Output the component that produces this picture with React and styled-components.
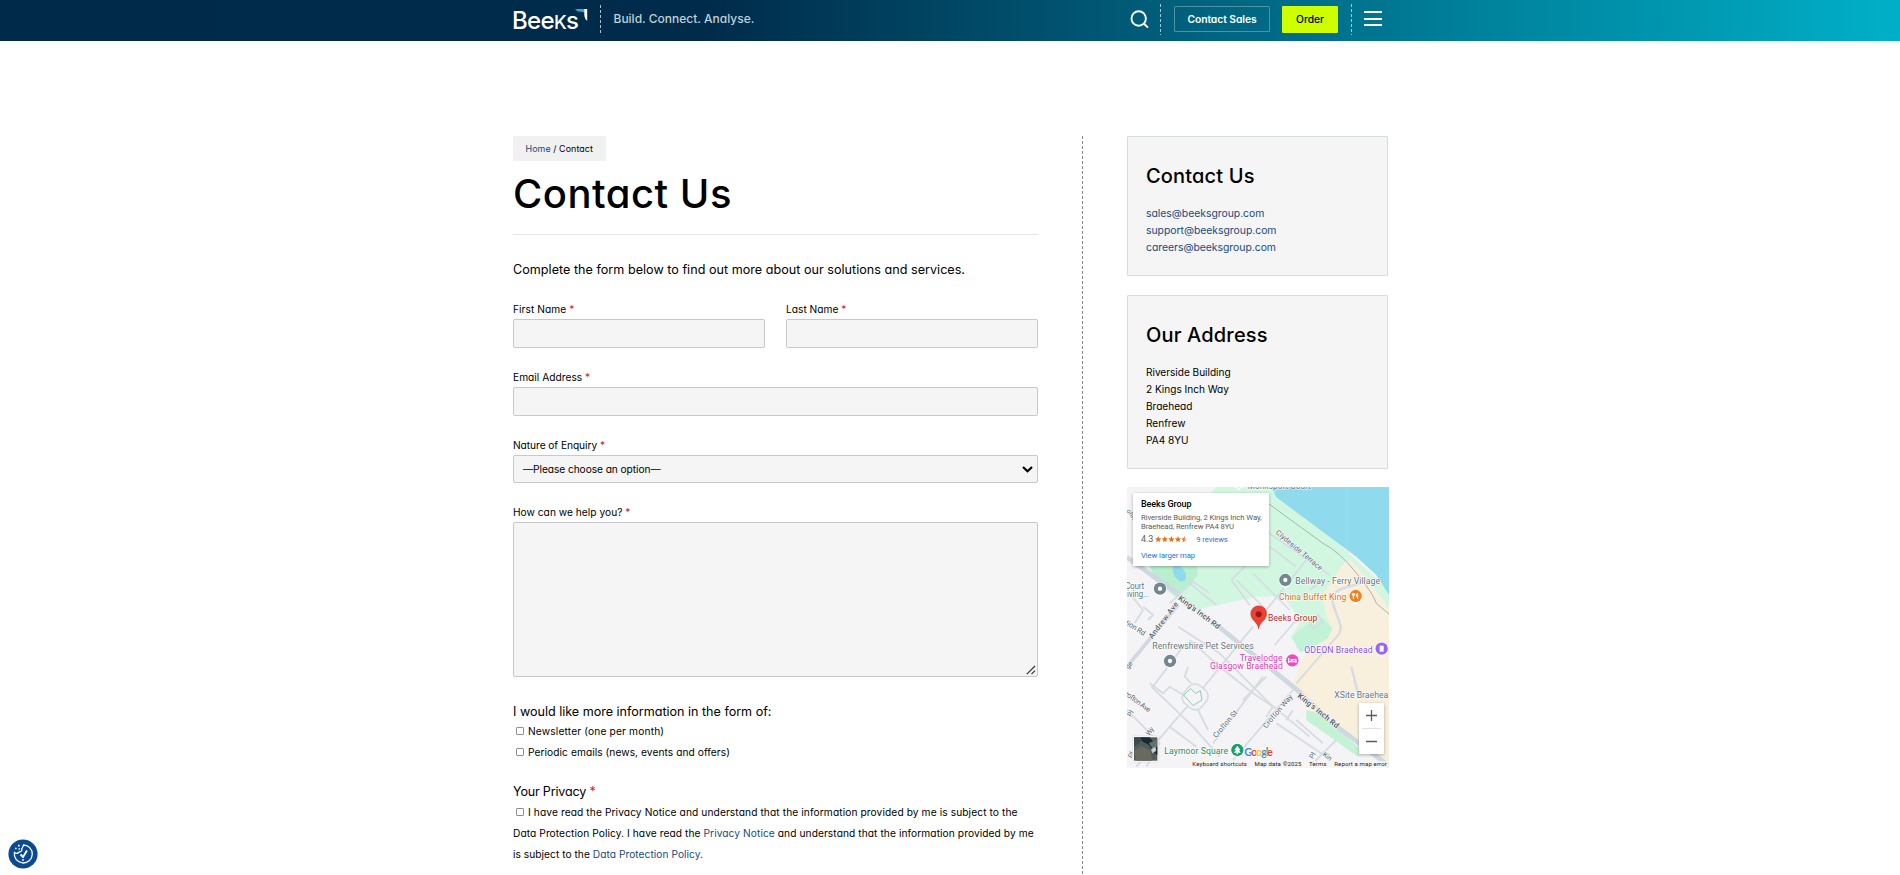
import React from "react";
import styled, { createGlobalStyle } from "styled-components";

const Global = createGlobalStyle`
  *, *::before, *::after { box-sizing: border-box; }
  body {
    margin: 0;
    background: #fff;
    color: #000;
    font-family: Inter, "Open Sans", sans-serif;
    font-feature-settings: "cv11";
    overflow: hidden;
  }
  h1, h2, p { margin: 0; font-weight: 500; }
`;

const Header = styled.header`
  height: 41px;
  background: linear-gradient(90deg, #002a4a 0%, #002b4a 37%, #00b0c8 100%);
`;
const HeaderInner = styled.div`
  width: 874px;
  height: 41px;
  margin: 0 auto;
  display: flex;
  align-items: flex-start;
`;
const Logo = styled.div`
  position: relative;
  width: 87px;
  height: 41px;
  color: #fff;
  font-size: 24px;
  font-weight: 500;
  line-height: 42px;
  letter-spacing: -0.65px;
  svg { position: absolute; left: 62px; top: 8px; }
`;
const LogoText = styled.span`
  display: inline-block;
  margin-left: -1px;
  span { font-size: 18.5px; }
`;
const Dash = styled.div`
  width: 1px;
  height: ${(p) => p.$h}px;
  margin: ${(p) => p.$top}px 0 0 ${(p) => p.$left || 0}px;
  background: repeating-linear-gradient(180deg, #a9c4cf 0 3px, transparent 3px 5px);
`;
const Tagline = styled.div`
  margin-left: 12.5px;
  font-size: 12px;
  font-weight: 500;
  line-height: 38px;
  color: #bfd0d9;
`;
const Tools = styled.div`
  margin-left: auto;
  display: flex;
  align-items: flex-start;
`;
const SearchIcon = styled.svg`
  margin: 10px 11px 0 0;
`;
const HeaderButton = styled.button`
  height: ${(p) => (p.$primary ? 27 : 26)}px;
  width: ${(p) => (p.$primary ? 56 : 96)}px;
  margin: 6px 0 0 ${(p) => (p.$primary ? 12 : 13)}px;
  padding: 0 0 1px;
  border: ${(p) => (p.$primary ? "0" : "1px solid #4f93a3")};
  border-radius: 1px;
  background: ${(p) => (p.$primary ? "#cdff00" : "transparent")};
  color: ${(p) => (p.$primary ? "#000" : "#fff")};
  font: ${(p) => (p.$primary ? 500 : 600)} 10.3px Inter, sans-serif;
  font-feature-settings: "cv11";
  letter-spacing: -0.06px;
`;
const Burger = styled.div`
  display: grid;
  gap: 4.5px;
  width: 18px;
  margin: 11px 5px 0 12px;
  i { height: 2px; background: #fff; }
`;

const Main = styled.main`
  width: 874px;
  margin: 0 auto;
  padding-top: 95px;
  display: flex;
  align-items: flex-start;
`;
const Left = styled.section`
  flex: none;
  width: 569px;
  height: 739px;
  padding-right: 44px;
`;
const ColumnRule = styled.div`
  flex: none;
  width: 1px;
  height: 739px;
  background: repeating-linear-gradient(180deg, #8a8a8a 0 3px, transparent 3px 5px);
`;
const Right = styled.aside`
  flex: none;
  width: 262px;
  margin-left: 44px;
  display: flex;
  flex-direction: column;
`;

const Link = styled.a`
  color: #17497f;
  text-decoration: none;
`;
const Crumbs = styled.nav`
  width: 93px;
  height: 25px;
  background: #f1f1f1;
  font-size: 8.9px;
  line-height: 25px;
  padding-left: 12.5px;
  letter-spacing: 0.08px;
  white-space: nowrap;
`;
const Title = styled.h1`
  margin-top: 10px;
  padding-bottom: 18px;
  height: 64px;
  border-bottom: 1px solid #e3e5e6;
  font-size: 40px;
  line-height: 45px;
  letter-spacing: 0.5px;
`;
const Intro = styled.p`
  margin: 25px 0 21px;
  font-size: 12.6px;
  font-weight: 400;
  line-height: 20px;
  letter-spacing: 0.018px;
`;
const Row = styled.div`
  display: grid;
  grid-template-columns: repeat(${(p) => p.$cols || 1}, 1fr);
  column-gap: 21px;
  margin-bottom: ${(p) => p.$gap || 21}px;
`;
const Label = styled.label`
  display: block;
  height: 18px;
  font-size: 10.2px;
  line-height: 16px;
  letter-spacing: ${(p) => p.$ls}px;
`;
const Required = styled.span`
  color: #d0252d;
`;
const fieldBox = `
  display: block;
  width: 100%;
  border: 1px solid #c6c8ca;
  border-radius: 2px;
  background: #f5f5f5;
  outline: 0;
`;
const Input = styled.input`
  ${fieldBox}
  height: 29px;
`;
const Select = styled.div`
  ${fieldBox}
  height: 28px;
  display: flex;
  align-items: center;
  justify-content: space-between;
  padding: 0 4px 0 9px;
  font-size: 10.2px;
  letter-spacing: -0.074px;
`;
const Area = styled.div`
  ${fieldBox}
  height: 155px;
  display: flex;
  align-items: flex-end;
  justify-content: flex-end;
  padding: 0 1px 1px 0;
`;
const Legend = styled.div`
  font-size: 12.6px;
  line-height: 20px;
  height: ${(p) => p.$h || 20}px;
  letter-spacing: ${(p) => p.$ls}px;
`;
const Option = styled.div`
  font-size: 10.2px;
  line-height: 21px;
  letter-spacing: ${(p) => p.$ls}px;
  white-space: nowrap;
`;
const Check = styled.span`
  display: inline-block;
  width: 8px;
  height: 8px;
  margin: 0 4px 0 3px;
  border: 1px solid #8f8f8f;
  border-radius: 1px;
  background: #fff;
`;
const Privacy = styled.div`
  margin-top: 18.5px;
`;

const Card = styled.section`
  width: 261px;
  height: ${(p) => p.$h}px;
  padding: 24px 18px 0;
  margin-bottom: ${(p) => p.$gap}px;
  border: 1px solid #d9dcdc;
  border-radius: 1px;
  background: #f5f5f5;
`;
const CardTitle = styled.h2`
  margin-bottom: 14px;
  font-size: 20px;
  line-height: 30px;
  letter-spacing: 0.17px;
`;
const CardLine = styled.div`
  font-size: ${(p) => (p.$plain ? 10.1 : 10.4)}px;
  line-height: 17px;
  letter-spacing: -0.02px;
`;

const MapBox = styled.div`
  position: relative;
  width: 262px;
  height: 281px;
  overflow: hidden;
  font-family: Roboto, sans-serif;
  > svg { display: block; }
`;
const Place = styled.div`
  position: absolute;
  left: 6px;
  top: 6px;
  width: 136px;
  height: 73px;
  padding: 6px 0 0 8px;
  background: #fff;
  box-shadow: 0 1px 3px rgba(0, 0, 0, 0.3);
  font-size: 7.7px;
  line-height: 9px;
  letter-spacing: -0.08px;
  color: #5b5b5b;
  white-space: nowrap;
`;
const PlaceName = styled.div`
  font-size: 9px;
  line-height: 11px;
  font-weight: 500;
  color: #000;
  margin-bottom: 3px;
`;
const Rating = styled.div`
  display: flex;
  align-items: center;
  height: 12px;
  margin-top: 2px;
  font-size: 9px;
  a { font-size: 7.7px; }
`;
const Stars = styled.svg`
  margin: 0 8px 0 2px;
`;
const MapLink = styled.a`
  color: #1a73e8;
`;
const Larger = styled.div`
  margin-top: 6px;
  color: #1a73e8;
`;
const Zoom = styled.div`
  position: absolute;
  right: 5px;
  top: 216px;
  width: 25px;
  height: 51px;
  background: #fff;
  box-shadow: 0 1px 3px rgba(0, 0, 0, 0.3);
`;
const Attribution = styled.div`
  position: absolute;
  right: 2px;
  bottom: 0;
  display: flex;
  gap: 7.5px;
  height: 8px;
  font-size: 6px;
  line-height: 8px;
  color: #222;
  letter-spacing: 0.15px;
  white-space: nowrap;
`;
const Cookie = styled.button`
  position: fixed;
  left: 8px;
  bottom: 6px;
  width: 30px;
  height: 30px;
  padding: 0;
  border: 0;
  background: none;
`;

const ROADS = [
  [5, "M240 310 L320 375 M180 370 L250 305 L300 340 M365 300 L480 185 M365 300 L420 375 M380 300 L470 390 L590 240 M450 140 L660 285 M480 200 L560 260 M430 280 L540 390 M640 300 L600 330 M495 495 L560 420 M600 430 L625 405 L640 428 L608 446 Z"],
  [5.5, "M52 560 L200 375 M60 340 L100 390 L75 430 M100 380 L130 405 L115 420 M240 480 L330 560 L430 640 M130 620 L220 500 M205 440 L330 520 M275 630 L430 440 M125 620 L250 740 L330 830 M120 610 L160 640 L180 620 L230 650 M235 560 L225 590 L245 610 M290 640 L265 690 L295 750 M180 740 L250 660 M80 860 L180 740 M310 790 L460 590 M330 520 L480 670 L600 770 M400 660 L470 590 M370 840 L550 630 M430 640 L490 680 L470 710 M500 730 L650 830 M560 720 L640 790 M600 860 L680 780 M52 690 L150 790 L110 860 M180 740 L260 800 M560 610 L690 460 M530 720 L550 690"],
  [7, "M690 460 L694 440 L670 372 Q665 335 700 325 L750 310 M725 560 L745 640"],
];

const LABELS = [
  [414, 27, "Monksport Court", 25, "#68767f", 190],
  [46, 326, "Court", 25, "#68767f", 58],
  [52, 351, "iving...", 25, "#68767f", 66],
  [557, 312, "Bellway - Ferry Village", 26, "#68767f", 254],
  [508, 361, "China Buffet King", 26, "#e8710a", 202],
  [475, 423, "Beeks Group", 26, "#c5221f", 148],
  [128, 508, "Renfrewshire Pet Services", 26, "#68767f", 304],
  [390, 542, "Travelodge", 26, "#e038b4", 129],
  [301, 567, "Glasgow Braehead", 26, "#e038b4", 219],
  [584, 518, "ODEON Braehead", 26, "#8a4fe8", 205],
  [674, 653, "XSite Braehea", 26, "#68767f", 162],
  [164, 822, "Laymoor Square", 26, "#1e8e63", 191],
];

const STREETS = [
  [204, 358, 37, "King's Inch Rd", 23, 150, 600],
  [562, 650, 39, "King's Inch Rd", 23, 152, 600],
  [128, 478, -53, "Andrew Ave", 23, 132, 500],
  [497, 160, 40, "Clydeside Terrace", 22, 175, 400],
  [320, 775, -50, "Crofton St", 22, 100, 400],
  [470, 746, -50, "Crofton Way", 22, 124, 400],
  [46, 645, 37, "rofton Ave", 22, 88, 400],
  [46, 432, 33, "tion Rd", 22, 66, 400],
  [50, 92, 58, "ohn", 19, 34, 400],
  [118, 768, -52, "Wy", 21, 26, 400],
  [64, 712, -60, "Pl", 21, 18, 400],
  [66, 836, -60, "Pl", 21, 18, 400],
  [610, 838, -60, "Pl", 21, 18, 400],
  [638, 826, 38, "Kin", 21, 28, 400],
  [56, 568, -50, "ge", 21, 22, 400],
];

const Pin = ({ x, y, color, children }) => (
  <g transform={`translate(${x} ${y})`}>
    <path d="M-19 6 Q-16 17 -6 21 L0 27 L6 21 Q16 17 19 6 Z" fill="#fff" />
    <circle r="20" fill="#fff" />
    <circle r="18.5" fill={color} />
    {children || <circle r="6.5" fill="#fff" />}
  </g>
);

const MapArt = () => (
  <svg width="262" height="281" viewBox="52 21 786 843">
    <rect x="52" y="21" width="786" height="843" fill="#f4f3f6" />
    <path d="M320 21 L500 21 L838 330 L838 440 L670 430 L650 480 L590 510 L575 515 L545 470 L575 420 L520 350 L440 350 L245 392 L120 290 L120 220 Z" fill="#d1f7e1" />
    <path d="M120 250 L260 250 L265 285 L205 352 L135 300 Z" fill="#b9efcf" />
    <path d="M720 238 Q690 255 672 300 L640 340 Q640 400 668 445 L655 475 L590 512 L545 620 L600 690 L838 864 L838 385 L770 290 Z" fill="#f8efdc" />
    <path d="M545 470 L590 435 L640 415 L668 445 L655 475 L590 512 L570 515 Z" fill="#c3f3d6" />
    <path d="M590 690 L640 705 L760 815 L745 830 L590 720 Z" fill="#c5f2d5" />
    <path d="M485 21 L838 21 L838 345 L800 285 L740 230 L500 52 Z" fill="#90daee" />
    <path d="M712 21 V215" stroke="#a5e2f2" strokeWidth="2" />
    <path d="M190 258 Q185 285 205 300 Q222 312 229 294 Q232 275 210 258 Z" fill="#90daee" />
    <path d="M475 70 L640 190 Q690 215 745 285 Q790 340 800 370 L838 402" fill="none" stroke="#9eb9b3" strokeWidth="3" />
    {ROADS.map(([w, d]) => (
      <path key={w} d={d} fill="none" stroke="#d5dce2" strokeWidth={w} strokeLinejoin="round" />
    ))}
    <path d="M52 232 L210 345 M325 438 L575 640 M680 738 L838 858" stroke="#cfd7e1" strokeWidth="14" />
    <path d="M210 345 L325 438 M575 640 L680 738" stroke="#e2e7ec" strokeWidth="12" />
    <path d="M52 560 L205 375" stroke="#d0d8e1" strokeWidth="11" />
    <rect x="222" y="617" width="68" height="70" rx="24" fill="#f4f3f6" stroke="#d5dce2" strokeWidth="5" transform="rotate(40 258 652)" />
    <path d="M243 626 L222 645 L235 660 L250 677 L277 660 L272 632 L258 640 Z" fill="none" stroke="#8ccbb7" strokeWidth="3" />

    <g fontFamily="Roboto, sans-serif" stroke="#fff" strokeOpacity=".8" strokeWidth="4" paintOrder="stroke" strokeLinejoin="round">
      {STREETS.map(([x, y, r, t, s, w, b], i) => (
        <text key={i} transform={`translate(${x} ${y}) rotate(${r})`} fontSize={s} fontWeight={b} fill="#566068" textLength={w}>{t}</text>
      ))}
      {LABELS.map(([x, y, t, s, c, w]) => (
        <text key={t + y} x={x} y={y} fontSize={s} fill={c} textLength={w}>{t}</text>
      ))}
    </g>

    <Pin x={388} y={4} color="#a8d9bd" />
    <Pin x={151} y={326} color="#748791" />
    <Pin x={527} y={300} color="#748791" />
    <Pin x={181} y={543} color="#748791" />
    <Pin x={738} y={348} color="#f28020">
      <path d="M-7 -9 V9 M-10 -9 V-2 H-3 V-9 M6 9 V-9 Q1 -5 2 2 H6" stroke="#fff" strokeWidth="3" fill="none" />
    </Pin>
    <Pin x={548} y={541} color="#ee4bc1">
      <path d="M-11 -7 V8 M-11 4 H11 V8 M11 4 V-2 H-1 V4 M-7 -1 H-3" stroke="#fff" strokeWidth="3.5" fill="none" />
    </Pin>
    <Pin x={816} y={506} color="#9b62f5">
      <path d="M-6 -9 H6 V9 H-6 Z" fill="#fff" />
    </Pin>
    <Pin x={383} y={810} color="#17a06a">
      <path d="M0 -13 L9 0 H5 L10 8 H-10 L-5 0 H-9 Z M-2 8 H2 V13 H-2 Z" fill="#fff" />
    </Pin>
    <path d="M447 447 C444 424 423 422 423 401 A24 24 0 0 1 471 401 C471 422 450 424 447 447 Z" fill="#ea4335" stroke="#c5221f" strokeWidth="1" />
    <circle cx="447" cy="403" r="9" fill="#a01713" />

    <g fontFamily="Lato, sans-serif" fontSize="33" fontWeight="700" stroke="#fff" strokeWidth="3" paintOrder="stroke">
      <text x="404" y="829" textLength="86">
        <tspan fill="#4285f4">G</tspan><tspan fill="#ea4335">o</tspan><tspan fill="#fbbc05">o</tspan><tspan fill="#4285f4">g</tspan><tspan fill="#34a853">l</tspan><tspan fill="#ea4335">e</tspan>
      </text>
    </g>

    <rect x="69" y="768" width="78" height="78" rx="4" fill="#fff" stroke="#b7bbbe" strokeWidth="1" />
    <rect x="73" y="772" width="70" height="70" fill="#515c5b" />
    <path d="M73 772 H100 L88 790 L73 800 Z" fill="#3b494c" />
    <path d="M80 842 L73 812 L95 798 L122 812 L128 842 Z" fill="#68695f" />
    <path d="M93 772 H120 L143 800 V826 L128 812 L118 795 L97 784 Z" fill="#172b35" />
    <path d="M118 790 L143 776 V800 L128 806 Z" fill="#63706f" />
    <path d="M124 808 L137 800 L140 812 L128 820 Z" fill="#c3cccb" />
    <rect x="245" y="843" width="593" height="21" fill="#f5f5f5" opacity=".7" />
  </svg>
);

const STAR = "M3.2 0 L4.1 2.2 L6.4 2.4 L4.7 3.9 L5.2 6.1 L3.2 4.9 L1.2 6.1 L1.7 3.9 L0 2.4 L2.3 2.2 Z";
const RatingStars = () => (
  <Stars width="33" height="7" viewBox="0 0 33 7" fill="#e7711b">
    {[0, 1, 2, 3].map((i) => (
      <path key={i} d={STAR} transform={`translate(${i * 6.6} 0)`} />
    ))}
    <path d={STAR} transform="translate(26.4 0)" fill="#d9d4cf" />
    <path d="M3.2 0 L3.2 4.9 L1.2 6.1 L1.7 3.9 L0 2.4 L2.3 2.2 Z" transform="translate(26.4 0)" />
  </Stars>
);

const Field = ({ label, ls, children }) => (
  <div>
    <Label $ls={ls}>{label} <Required>*</Required></Label>
    {children}
  </div>
);

export default function App() {
  return (
    <>
      <Global />
      <Header>
        <HeaderInner>
          <Logo>
            <LogoText>Bee<span>K</span>s</LogoText>
            <svg width="13" height="14" viewBox="0 0 13 14">
              <path d="M0 1 H9.4 V4.6 Q6 3.4 2.6 3.6 Z" fill="#35a9cc" />
              <path d="M9.2 1 H12.2 V13 Q9.8 11 9.4 8 Z" fill="#fff" />
            </svg>
          </Logo>
          <Dash $h={28} $top={5} />
          <Tagline>Build. Connect. Analyse.</Tagline>
          <Tools>
            <SearchIcon width="19" height="19" viewBox="0 0 19 19" fill="none" stroke="#fff" strokeWidth="1.9">
              <circle cx="8.7" cy="8.5" r="7.2" />
              <path d="M13.8 13.5 L18 17.7" />
            </SearchIcon>
            <Dash $h={31} $top={4} />
            <HeaderButton>Contact Sales</HeaderButton>
            <HeaderButton $primary>Order</HeaderButton>
            <Dash $h={31} $top={4} $left={13} />
            <Burger><i /><i /><i /></Burger>
          </Tools>
        </HeaderInner>
      </Header>
      <Main>
        <Left>
          <Crumbs><Link>Home</Link> / Contact</Crumbs>
          <Title>Contact Us</Title>
          <Intro>Complete the form below to find out more about our solutions and services.</Intro>
          <Row $cols={2}>
            <Field label="First Name" ls={0.06}><Input /></Field>
            <Field label="Last Name" ls={0.01}><Input /></Field>
          </Row>
          <Row>
            <Field label="Email Address" ls={0.02}><Input /></Field>
          </Row>
          <Row>
            <Field label="Nature of Enquiry" ls={-0.06}>
              <Select>
                —Please choose an option—
                <svg width="11" height="7" viewBox="0 0 11 7" fill="none" stroke="#000" strokeWidth="2.2"><path d="M1 1 L5.5 5.2 L10 1" /></svg>
              </Select>
            </Field>
          </Row>
          <Row $gap={25}>
            <Field label="How can we help you?" ls={0.02}>
              <Area>
                <svg width="10" height="10" viewBox="0 0 10 10" stroke="#333" strokeWidth="1.2"><path d="M0.8 9.2 L9 1 M5.5 9.2 L9 5.7" /></svg>
              </Area>
            </Field>
          </Row>
          <Legend $ls={-0.02} $h={19}>I would like more information in the form of:</Legend>
          <Option $ls={0.16}><Check />Newsletter (one per month)</Option>
          <Option $ls={0.06}><Check />Periodic emails (news, events and offers)</Option>
          <Privacy>
            <Legend $ls={-0.2}>Your Privacy <Required>*</Required></Legend>
            <Option $ls={0.1}><Check />I have read the Privacy Notice and understand that the information provided by me is subject to the</Option>
            <Option $ls={0.075}>Data Protection Policy. I have read the <Link>Privacy Notice</Link> and understand that the information provided by me</Option>
            <Option $ls={0.037}>is subject to the <Link>Data Protection Policy</Link>.</Option>
          </Privacy>
        </Left>
        <ColumnRule />
        <Right>
          <Card $h={140} $gap={19}>
            <CardTitle>Contact Us</CardTitle>
            {["sales", "support", "careers"].map((n) => (
              <CardLine key={n}><Link>{n}@beeksgroup.com</Link></CardLine>
            ))}
          </Card>
          <Card $h={174} $gap={18}>
            <CardTitle>Our Address</CardTitle>
            {["Riverside Building", "2 Kings Inch Way", "Braehead", "Renfrew", "PA4 8YU"].map((n) => (
              <CardLine key={n} $plain>{n}</CardLine>
            ))}
          </Card>
          <MapBox>
            <MapArt />
            <Place>
              <PlaceName>Beeks Group</PlaceName>
              <div>Riverside Building, 2 Kings Inch Way,</div>
              <div>Braehead, Renfrew PA4 8YU</div>
              <Rating>4.3 <RatingStars /><MapLink>9 reviews</MapLink></Rating>
              <Larger>View larger map</Larger>
            </Place>
            <Zoom>
              <svg width="25" height="51" viewBox="0 0 25 51" stroke="#5c5c5c" strokeWidth="1.3">
                <path d="M7 12.5 H18 M12.5 7 V18 M7 38.5 H18" />
                <path d="M3 25.5 H22" stroke="#e2e2e2" strokeWidth="1" />
              </svg>
            </Zoom>
            <Attribution>
              <span>Keyboard shortcuts</span><span>Map data ©2025</span><span>Terms</span><span>Report a map error</span>
            </Attribution>
          </MapBox>
        </Right>
      </Main>
      <Cookie>
        <svg width="30" height="30" viewBox="0 0 30 30" fill="none" stroke="#fff" strokeWidth="1.3">
          <circle cx="15" cy="15" r="14.6" fill="#0b4a92" stroke="none" />
          <path d="M15 6 A9 9 0 1 1 6.4 13.5 Q9 15.5 11.3 13 Q14.5 12.5 13.7 9.7 Q15.5 8.5 15 6" />
          <path d="M12.5 15.5 L15 18 L19 11.5" strokeWidth="1.8" />
          <path d="M15 20 V22" />
          <path d="M7 9.5 h1.6 M10 6.6 h1.6 M10.5 10 h1.4" strokeWidth="1.6" />
        </svg>
      </Cookie>
    </>
  );
}
